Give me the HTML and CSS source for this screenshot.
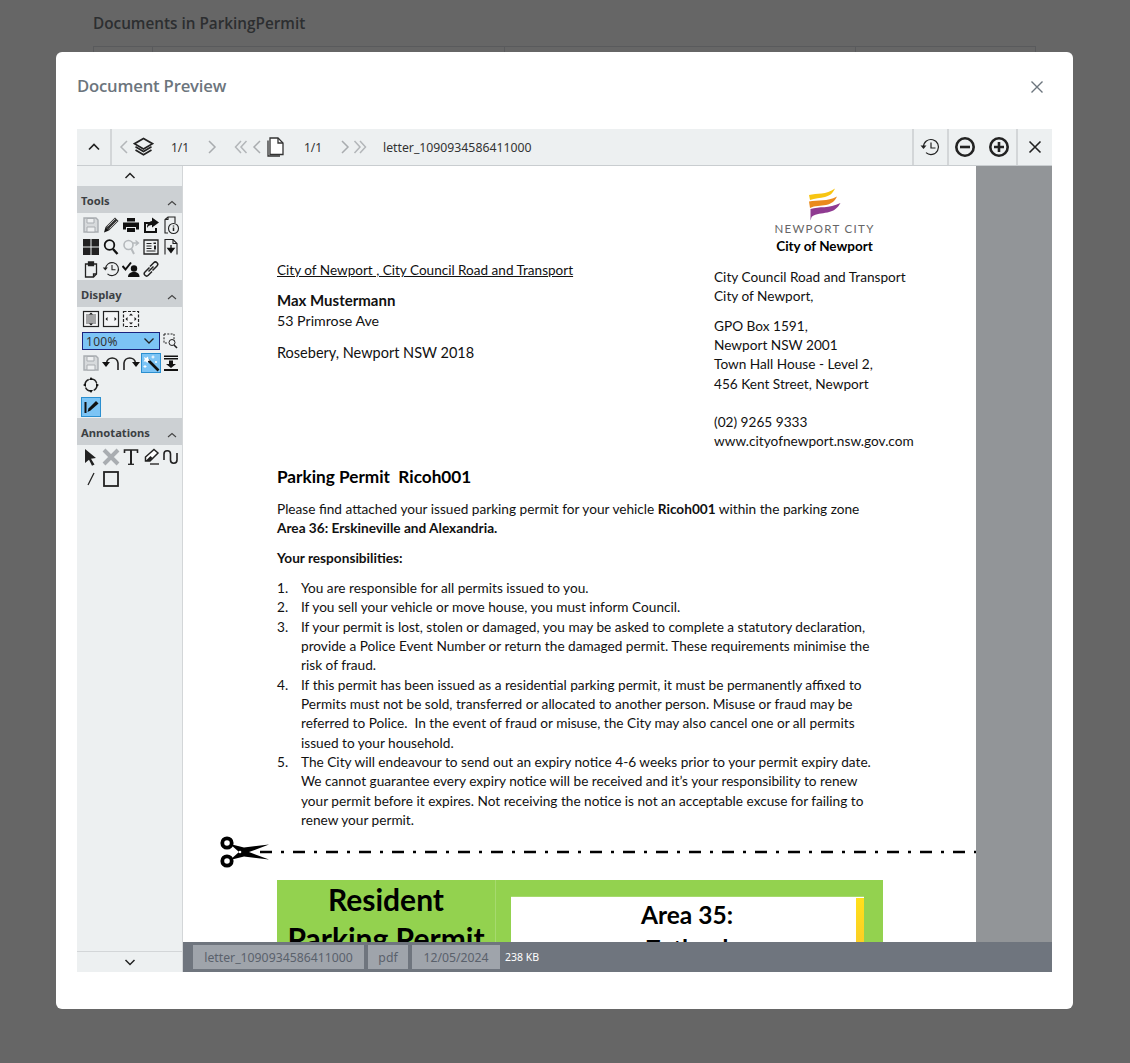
FILE: index.html
```html
<!DOCTYPE html>
<html lang="en">
<head>
  <meta charset="UTF-8">
  <meta name="viewport" content="width=device-width, initial-scale=1.0">
  <title>Document Preview</title>
  <link rel="stylesheet" href="styles.css">
</head>
<body>
  <div class="behind">
    <h2 class="behind-title">Documents in ParkingPermit</h2>
    <div class="behind-table">
      <div class="behind-cell c1"></div>
      <div class="behind-cell c2"></div>
      <div class="behind-cell c3"></div>
      <div class="behind-cell c4"></div>
    </div>
  </div>

  <div class="overlay"></div>

  <div class="modal">
    <div class="modal-head">
      <h3 class="modal-title">Document Preview</h3>
      <svg class="modal-close" width="14" height="14" viewBox="0 0 14 14"><path d="M1.500 1.500l11 11M12.500 1.500l-11 11" stroke="#6c757d" stroke-width="1.400" fill="none"/></svg>
    </div>

    <div class="viewer">
      <div class="toolbar">
        <div class="tb-btn tb-collapse">
          <svg width="14" height="14" viewBox="0 0 14 14"><path d="M2 9.500l5-5 5 5" stroke="#222" stroke-width="1.700" fill="none"/></svg>
        </div>
        <div class="tb-item w16 ml4"><svg width="10" height="16" viewBox="0 0 10 16"><path d="M8 2L2 8l6 6" stroke="#b3b6b9" stroke-width="1.500" fill="none"/></svg></div>
        <div class="tb-item w22">
          <svg width="21" height="20" viewBox="0 0 21 20" fill="none" stroke="#222" stroke-width="1.700"><path d="M10.500 1.500l9 5.200-9 5.200-9-5.200z"/><path d="M2.500 9.800l8 4.600 8-4.600"/><path d="M2.500 13l8 4.700 8-4.700"/></svg>
        </div>
        <div class="tb-item w52 tb-text">1/1</div>
        <div class="tb-item w12"><svg width="10" height="16" viewBox="0 0 10 16"><path d="M2 2l6 6-6 6" stroke="#a9acaf" stroke-width="1.500" fill="none"/></svg></div>
        <div class="tb-item w18 ml14"><svg width="14" height="16" viewBox="0 0 14 16" fill="none" stroke="#b3b6b9" stroke-width="1.500"><path d="M7 2L1.500 8 7 14M12.500 2L7 8l5.500 6"/></svg></div>
        <div class="tb-item w14"><svg width="10" height="16" viewBox="0 0 10 16"><path d="M8 2L2 8l6 6" stroke="#a9acaf" stroke-width="1.500" fill="none"/></svg></div>
        <div class="tb-item w24">
          <svg width="18" height="20" viewBox="0 0 18 20" fill="#fff" stroke="#333" stroke-width="1.300"><path d="M1 3.500v15.500h12" fill="none"/><path d="M3 1h8l5 5v11.500H3z"/><path d="M11 1v5h5" fill="none"/></svg>
        </div>
        <div class="tb-item w50 tb-text">1/1</div>
        <div class="tb-item w14"><svg width="10" height="16" viewBox="0 0 10 16"><path d="M2 2l6 6-6 6" stroke="#a9acaf" stroke-width="1.500" fill="none"/></svg></div>
        <div class="tb-item w16"><svg width="14" height="16" viewBox="0 0 14 16" fill="none" stroke="#b3b6b9" stroke-width="1.500"><path d="M1.500 2L7 8l-5.500 6M7 2l5.500 6L7 14"/></svg></div>
        <div class="tb-name">letter_1090934586411000</div>

        <div class="tb-right">
          <div class="tb-btn tb-sep">
            <svg width="22" height="20" viewBox="0 0 22 20" fill="none" stroke="#222" stroke-width="1.200"><path d="M4.500 10a7.500 7.500 0 1 1 2.500 5.600"/><path d="M1.500 8.500h6l-3 3.500z" fill="#222" stroke="none"/><path d="M12 5.500V11h4.500"/></svg>
          </div>
          <div class="tb-btn tb-sep">
            <svg width="22" height="22" viewBox="0 0 22 22" fill="none" stroke="#222" stroke-width="2.600"><circle cx="11" cy="11" r="8.700"/><path d="M6 11h10"/></svg>
          </div>
          <div class="tb-btn">
            <svg width="22" height="22" viewBox="0 0 22 22" fill="none" stroke="#222" stroke-width="2.600"><circle cx="11" cy="11" r="8.700"/><path d="M6 11h10M11 6v10"/></svg>
          </div>
          <div class="tb-btn tb-sep tb-last">
            <svg width="14" height="14" viewBox="0 0 14 14"><path d="M1.500 1.500l11 11M12.500 1.500l-11 11" stroke="#222" stroke-width="1.600" fill="none"/></svg>
          </div>
        </div>
      </div>

      <div class="viewer-body">
        <aside class="side">
          <div class="side-scroll">
            <svg width="12" height="12" viewBox="0 0 12 12"><path d="M1.500 8l4.500-4.500L10.500 8" stroke="#222" stroke-width="1.500" fill="none"/></svg>
          </div>

          <div class="side-panels">
            <div class="side-head"><span>Tools</span><svg width="10" height="10" viewBox="0 0 10 10"><path d="M1 7l4-3.500L9 7" stroke="#444" stroke-width="1.100" fill="none"/></svg></div>
            <div class="icon-grid tools-grid">
              <div class="ic"><svg width="18" height="18" viewBox="0 0 18 18"><path d="M2 2h12l2 2v12H2z" fill="#d7dadc" stroke="#a9adb1" stroke-width="1.400"/><path d="M5 2.500h7v4.500H5z" fill="#eef0f1" stroke="#a9adb1"/><path d="M5 11h8v5H5z" fill="#eef0f1" stroke="#a9adb1"/></svg></div>
              <div class="ic"><svg width="18" height="18" viewBox="0 0 18 18"><path d="M13 1.500l3.500 3.500-9.500 9.500-3.500-3.500z" fill="#333"/><path d="M2 16.500l1.500-5.500 3.500 3.500z" fill="#111"/><path d="M5.500 10.500l7.500-7.500M7.500 12.500l7.500-7.500" stroke="#eee" stroke-width=".7"/></svg></div>
              <div class="ic"><svg width="18" height="18" viewBox="0 0 18 18" fill="#111"><path d="M5 2h8v3.500H5z"/><path d="M1 6.500h16v7h-3v-2.500H4v2.500H1z"/><path d="M5 12h8v4H5z"/></svg></div>
              <div class="ic"><svg width="18" height="18" viewBox="0 0 18 18"><path d="M2 6h6v2H4v7h9v-3h2v5H2z" fill="#111"/><path d="M10 1.500l7 5-7 5V9C7.500 9 6 10 5 12c0-4 2-6.500 5-7z" fill="#111"/></svg></div>
              <div class="ic"><svg width="18" height="19" viewBox="0 0 18 19" fill="none" stroke="#222" stroke-width="1.100"><path d="M3 12V3.500L6 1h7v6"/><path d="M3 3.500h3V1"/><path d="M3 12v5h3"/><circle cx="11.500" cy="12.500" r="5"/><path d="M11.500 11.500v3.500M11.500 9.500v1" stroke-width="1.500"/></svg></div>

              <div class="ic"><svg width="18" height="18" viewBox="0 0 18 18" fill="#222"><path d="M1 1h7.500v7.500H1zM9.500 1H17v7.500H9.500zM1 9.500h7.500V17H1zM9.500 9.500H17V17H9.500z"/></svg></div>
              <div class="ic"><svg width="18" height="18" viewBox="0 0 18 18" fill="none" stroke="#111"><circle cx="7.500" cy="7" r="4.800" stroke-width="1.800"/><path d="M11 11l4.500 5" stroke-width="2.400"/></svg></div>
              <div class="ic"><svg width="18" height="18" viewBox="0 0 18 18" fill="none" stroke="#b5b9bc"><circle cx="6.500" cy="7" r="4.500" stroke-width="1.600"/><path d="M9.500 11l2.500 5" stroke-width="2"/><path d="M11 5h5M13.500 2.500L16.500 5l-3 2.500" stroke-width="1.300"/></svg></div>
              <div class="ic"><svg width="18" height="18" viewBox="0 0 18 18" fill="none" stroke="#222"><path d="M2 2h14v14H2z" stroke-width="1.300"/><path d="M4.500 5.500h5M4.500 8h5M4.500 10.500h5M4.500 13h9" stroke-width="1"/><path d="M11.500 4.500h2.500v1.500h-2.500zM12 7.500h2v4h-2z" fill="#222" stroke="none"/></svg></div>
              <div class="ic"><svg width="18" height="18" viewBox="0 0 18 18" fill="none" stroke="#222" stroke-width="1.100"><path d="M3 16.500V1.500h8l4 4v11"/><path d="M11 1.500v4h4"/><path d="M9 7v6M6 10.500l3 4 3-4z" fill="#111" stroke="#111" stroke-width="1.300"/></svg></div>

              <div class="ic"><svg width="18" height="18" viewBox="0 0 18 18" fill="none" stroke="#222" stroke-width="1.300"><path d="M3.500 4h11v10l-3 3h-8z"/><path d="M6.500 2h5v3.500h-5z" fill="#222"/><path d="M11.500 17v-3h3"/></svg></div>
              <div class="ic"><svg width="18" height="18" viewBox="0 0 18 18" fill="none" stroke="#222" stroke-width="1.100"><path d="M3.500 9a6.500 6.500 0 1 1 2 4.800"/><path d="M.8 7.500h5l-2.500 3z" fill="#222" stroke="none"/><path d="M10 5v4.800h3.500"/></svg></div>
              <div class="ic"><svg width="18" height="18" viewBox="0 0 18 18"><path d="M.5 6l3 3.500L9 2.500" stroke="#111" stroke-width="2" fill="none"/><circle cx="12" cy="8.500" r="3.200" fill="#111"/><path d="M6 17c0-3.500 2.500-5 6-5s5.500 1.500 5.500 5z" fill="#111"/></svg></div>
              <div class="ic"><svg width="18" height="18" viewBox="0 0 18 18" fill="none" stroke="#222" stroke-width="1.500"><path d="M7.500 7.500L3 12a2.300 2.300 0 0 0 3.300 3.300L10 11.500"/><path d="M10.500 10.500L15 6a2.300 2.300 0 0 0-3.300-3.300L8 6.500"/><path d="M6.500 11.500l5-5"/></svg></div>
            </div>

            <div class="side-head"><span>Display</span><svg width="10" height="10" viewBox="0 0 10 10"><path d="M1 7l4-3.500L9 7" stroke="#444" stroke-width="1.100" fill="none"/></svg></div>
            <div class="icon-grid display-top">
              <div class="ic"><svg width="18" height="18" viewBox="0 0 18 18"><rect x="1.500" y="1.500" width="15" height="15" fill="#f4f5f6" stroke="#222" stroke-width="1.200"/><path d="M4 5h10M4 7h10M4 9h10M4 11h10M4 13h10" stroke="#555"/><path d="M9 2.500l2 2H7zM9 15.500l2-2H7z" fill="#111"/></svg></div>
              <div class="ic"><svg width="18" height="18" viewBox="0 0 18 18"><rect x="1.500" y="1.500" width="15" height="15" fill="#f4f5f6" stroke="#222" stroke-width="1.200"/><path d="M3.500 9l2-2v4zM14.500 9l-2-2v4z" fill="#111"/></svg></div>
              <div class="ic"><svg width="18" height="18" viewBox="0 0 18 18"><rect x="1.500" y="1.500" width="15" height="15" fill="#f4f5f6" stroke="#222" stroke-width="1.200" stroke-dasharray="3 1.500"/><path d="M3.500 9l2-2v4zM14.500 9l-2-2v4zM9 3.500l2 2H7zM9 14.500l2-2H7z" fill="#111"/></svg></div>
            </div>
            <div class="zoom-row">
              <div class="zoom-select"><span>100%</span><svg width="12" height="8" viewBox="0 0 12 8"><path d="M1.500 1.500L6 6l4.500-4.500" stroke="#222" stroke-width="1.300" fill="none"/></svg></div>
              <svg width="16" height="16" viewBox="0 0 16 16" fill="none" stroke="#222"><path d="M1 1h10v7M1 1v9h4" stroke-dasharray="2 1.300"/><circle cx="9" cy="9.500" r="3"/><path d="M11 12l3 3" stroke-width="1.600"/></svg>
            </div>
            <div class="icon-grid display-bottom">
              <div class="ic"><svg width="18" height="18" viewBox="0 0 18 18"><path d="M2 2h12l2 2v12H2z" fill="#d7dadc" stroke="#a9adb1" stroke-width="1.400"/><path d="M5 2.500h7v4.500H5z" fill="#eef0f1" stroke="#a9adb1"/><path d="M5 11h8v5H5z" fill="#eef0f1" stroke="#a9adb1"/></svg></div>
              <div class="ic"><svg width="18" height="18" viewBox="0 0 18 18" fill="none"><path d="M4.500 9a5.800 5.800 0 0 1 11.500 0v7" stroke="#222" stroke-width="1.600"/><path d="M0 8h8l-4 5z" fill="#111"/></svg></div>
              <div class="ic"><svg width="18" height="18" viewBox="0 0 18 18" fill="none"><path d="M13.500 9A5.800 5.800 0 0 0 2 9v7" stroke="#222" stroke-width="1.600"/><path d="M18 8h-8l4 5z" fill="#111"/></svg></div>
              <div class="ic ic-on"><svg width="18" height="18" viewBox="0 0 18 18"><path d="M6 6l10.500 10.500" stroke="#111" stroke-width="2.600"/><path d="M2 3l2 1 2-1.500.3 2.400 2 1.300-2.200.8-.7 2.300-1.400-1.900-2.500.2 1.300-2z" fill="#fff"/><path d="M11 1.500v3M9.500 3h3M3 11v3M1.500 12.500h3M14 7v2M13 8h2" stroke="#fff"/></svg></div>
              <div class="ic"><svg width="18" height="18" viewBox="0 0 18 18" fill="#111"><path d="M2 1.500h14v1.500H2zM2 4h14v1.500H2z"/><path d="M7 6.500h4V10h3l-5 4-5-4h3z"/><path d="M2 15h14v2H2z"/></svg></div>
            </div>
            <div class="icon-grid display-single">
              <div class="ic"><svg width="18" height="18" viewBox="0 0 18 18"><circle cx="9" cy="9" r="6" fill="none" stroke="#222" stroke-width="1.500" stroke-dasharray="6.400 3"/><path d="M9 1l2 3H7zM9 17l-2-3h4zM1 9l3-2v4zM17 9l-3 2V7z" fill="#111"/></svg></div>
            </div>
            <div class="icon-grid display-single last">
              <div class="ic ic-on"><svg width="18" height="18" viewBox="0 0 18 18"><path d="M3.500 4v11" stroke="#111" stroke-width="2"/><path d="M14 3l2.500 2.500-8 7L5.500 14l1-3.500z" fill="#111"/></svg></div>
            </div>

            <div class="side-head"><span>Annotations</span><svg width="10" height="10" viewBox="0 0 10 10"><path d="M1 7l4-3.500L9 7" stroke="#444" stroke-width="1.100" fill="none"/></svg></div>
            <div class="icon-grid annot-grid">
              <div class="ic"><svg width="18" height="18" viewBox="0 0 18 18"><path d="M3 1l11 9-5 .8 3.500 5.700-2.500 1.200-3-6L3 15z" fill="#222"/></svg></div>
              <div class="ic"><svg width="18" height="18" viewBox="0 0 18 18"><path d="M2 2l14 14M16 2L2 16" stroke="#a9adb1" stroke-width="4"/></svg></div>
              <div class="ic"><svg width="18" height="18" viewBox="0 0 18 18" fill="none" stroke="#222"><path d="M2.500 5V2h13v3" stroke-width="1.600"/><path d="M9 2v14" stroke-width="2"/><path d="M6 16.300h6" stroke-width="1.300"/></svg></div>
              <div class="ic"><svg width="18" height="18" viewBox="0 0 18 18"><path d="M12 1.500l4 3.500-8 8H3.500v-4z" fill="#fff" stroke="#222" stroke-width="1.500"/><path d="M3.500 13l5-5 2 2-3 3z" fill="#222"/><path d="M8 15h9v2H8z" fill="#666"/></svg></div>
              <div class="ic"><svg width="18" height="18" viewBox="0 0 18 18"><path d="M2 12V6a3.200 3.200 0 0 1 6.500 0v6a3.200 3.200 0 0 0 6.500 0V5" fill="none" stroke="#222" stroke-width="1.600"/></svg></div>
              <div class="ic"><svg width="18" height="18" viewBox="0 0 18 18"><path d="M12 3L6 15" stroke="#222" stroke-width="1.300"/></svg></div>
              <div class="ic"><svg width="18" height="18" viewBox="0 0 18 18"><rect x="2" y="2" width="14" height="14" fill="none" stroke="#222" stroke-width="1.800"/></svg></div>
            </div>
          </div>

          <div class="side-scroll side-scroll-bottom">
            <svg width="12" height="12" viewBox="0 0 12 12"><path d="M1.500 4l4.500 4.500L10.500 4" stroke="#222" stroke-width="1.500" fill="none"/></svg>
          </div>
        </aside>

        <div class="doc-area">
          <div class="doc-scroll">
            <div class="page">
              <div class="letter-top">
                <div class="addr-left">
                  <p class="sender">City of Newport , City Council Road and Transport</p>
                  <p class="name">Max Mustermann</p>
                  <p class="street">53 Primrose Ave</p>
                  <p class="suburb">Rosebery, Newport NSW 2018</p>
                </div>
                <div class="addr-right">
                  <div class="logo">
                    <svg width="36" height="33" viewBox="0 0 36 33">
                      <path d="M2 7C10 5 19 7 28 .5c-2 4-4 7-10 8.500-5 1.500-10 1-15 3z" fill="#f7c512"/>
                      <path d="M2 13.500c9-2 18 .5 28-5-2 4.500-5 7-11 8.500-5 1-11 .5-16 3z" fill="#ea8a1d"/>
                      <path d="M3.500 21c9-3 18 0 30-6-3 5-6 8-13 9.500-6 1-11 1-15.500 4-1 1.500-1 3-1.500 4z" fill="#8f3a91"/>
                    </svg>
                    <div class="logo-word">NEWPORT CITY</div>
                    <div class="logo-city">City of Newport</div>
                  </div>
                  <p class="r1">City Council Road and Transport</p>
                  <p>City of Newport,</p>
                  <p class="r2">GPO Box 1591,</p>
                  <p>Newport NSW 2001</p>
                  <p>Town Hall House - Level 2,</p>
                  <p>456 Kent Street, Newport</p>
                  <p class="r3">(02) 9265 9333</p>
                  <p>www.cityofnewport.nsw.gov.com</p>
                </div>
              </div>

              <h1 class="permit-title">Parking Permit&nbsp; Ricoh001</h1>
              <p class="intro">Please find attached your issued parking permit for your vehicle <b>Ricoh001</b> within the parking zone<br><b>Area 36: Erskineville and Alexandria.</b></p>
              <p class="resp"><b>Your responsibilities:</b></p>
              <ol class="rules">
                <li>You are responsible for all permits issued to you.</li>
                <li>If you sell your vehicle or move house, you must inform Council.</li>
                <li>If your permit is lost, stolen or damaged, you may be asked to complete a statutory declaration,<br>provide a Police Event Number or return the damaged permit. These requirements minimise the<br>risk of fraud.</li>
                <li>If this permit has been issued as a residential parking permit, it must be permanently affixed to<br>Permits must not be sold, transferred or allocated to another person. Misuse or fraud may be<br>referred to Police.&nbsp; In the event of fraud or misuse, the City may also cancel one or all permits<br>issued to your household.</li>
                <li>The City will endeavour to send out an expiry notice 4-6 weeks prior to your permit expiry date.<br>We cannot guarantee every expiry notice will be received and it’s your responsibility to renew<br>your permit before it expires. Not receiving the notice is not an acceptable excuse for failing to<br>renew your permit.</li>
              </ol>

              <svg class="cut-line" width="756" height="34" viewBox="0 0 756 34">
                <g fill="none" stroke="#000" stroke-width="3.800">
                  <circle cx="7" cy="9" r="4.700"/>
                  <circle cx="7" cy="27" r="4.700"/>
                </g>
                <path d="M10 10l14 3.500 25-3-20 7.500 20 7.500-25-3-14 3.500 9-8z" fill="#000"/>
                <circle cx="20" cy="18" r="1.300" fill="#fff"/>
                <line x1="40" y1="18" x2="756" y2="18" stroke="#000" stroke-width="2.400" stroke-dasharray="12 9 3 9"/>
              </svg>

              <div class="permit">
                <div class="permit-left">
                  <div>Resident</div>
                  <div>Parking Permit</div>
                </div>
                <div class="permit-right">
                  <div class="permit-white">
                    <div class="area-text">
                      <div>Area 35:</div>
                      <div>Zetland</div>
                    </div>
                    <div class="permit-strip"></div>
                  </div>
                </div>
              </div>
            </div>
            <div class="gutter"></div>
          </div>

          <div class="status">
            <span class="chip chip-name">letter_1090934586411000</span>
            <span class="chip chip-ext">pdf</span>
            <span class="chip chip-date">12/05/2024</span>
            <span class="size">238 KB</span>
          </div>
        </div>
      </div>
    </div>
  </div>
</body>
</html>
```

FILE: styles.css
```css
* {
  margin: 0;
  padding: 0;
  box-sizing: border-box;
}
html, body {
  height: 100%;
  overflow: hidden;
}
body {
  background: #fff;
  font-family: "Open Sans", "Noto Sans", sans-serif;
}

/* page behind the modal */
.behind {
  padding: 13px 94px 0 93px;
}
.behind-title {
  font-size: 15.3px;
  line-height: 21px;
  font-weight: 600;
  color: #6f7479;
}
.behind-table {
  display: flex;
  height: 200px;
  margin-top: 12px;
  border: 1px solid #dee2e6;
}
.behind-cell {
  border-right: 1px solid #dee2e6;
}
.c1 { width: 59px; }
.c2 { width: 352px; }
.c3 { width: 351px; }
.c4 { flex: 1; border-right: 0; }

.overlay {
  position: fixed;
  inset: 0;
  background: rgba(0, 0, 0, 0.6);
}

.modal {
  position: fixed;
  left: 56px;
  top: 52px;
  width: 1017px;
  height: 957px;
  padding: 0 21px;
  background: #fff;
  border-radius: 6px;
}
.modal-head {
  display: flex;
  justify-content: space-between;
  align-items: center;
  height: 77px;
  padding-bottom: 10px;
}
.modal-title {
  font-size: 16.7px;
  font-weight: 600;
  color: #6c757d;
  letter-spacing: -0.2px;
}
.modal-close {
  margin: 2px 8px 0 0;
}

/* viewer */
.viewer {
  height: 843px;
  display: flex;
  flex-direction: column;
  background: #edf0f1;
}
.toolbar {
  display: flex;
  align-items: center;
  flex: none;
  height: 37px;
  border-bottom: 1px solid #c9cdd0;
  font-family: "Noto Sans", sans-serif;
  font-size: 12.25px;
  color: #333;
}
.tb-btn {
  display: flex;
  align-items: center;
  justify-content: center;
  width: 34px;
  height: 36px;
}
.tb-collapse {
  width: 35px;
  border-right: 2px solid #d3d6d8;
}
.tb-item {
  display: flex;
  align-items: center;
  justify-content: center;
}
.tb-text { font-size: 12px; }
.w12 { width: 12px; }
.w14 { width: 14px; }
.w16 { width: 16px; }
.w18 { width: 18px; }
.w22 { width: 22px; }
.w24 { width: 24px; }
.w50 { width: 50px; }
.w52 { width: 52px; }
.ml4 { margin-left: 4px; }
.ml14 { margin-left: 14px; }
.tb-name {
  margin-left: 15px;
}
.tb-right {
  display: flex;
  margin-left: auto;
}
.tb-sep {
  width: 35px;
  padding-right: 2px;
  border-left: 2px solid #d3d6d8;
}
.tb-last {
  width: 36px;
  padding-right: 0;
}

.viewer-body {
  display: flex;
  flex: 1;
  min-height: 0;
}

/* left panel */
.side {
  display: flex;
  flex-direction: column;
  flex: none;
  width: 106px;
  border-right: 1px solid #d3d6d8;
}
.side-scroll {
  display: flex;
  align-items: center;
  justify-content: center;
  flex: none;
  height: 20px;
}
.side-scroll-bottom {
  height: 21px;
  border-top: 1px solid #d3d6d8;
}
.side-panels {
  flex: 1;
  min-height: 0;
}
.side-head {
  display: flex;
  justify-content: space-between;
  align-items: center;
  height: 27px;
  padding: 1px 5px 0 4px;
  background: #ccd0d3;
  font-family: "Noto Sans", sans-serif;
  font-size: 11.2px;
  font-weight: 700;
  color: #3c4043;
}
.side-head svg {
  margin-top: 5px;
}
.icon-grid {
  display: grid;
  grid-template-columns: repeat(5, 20px);
  grid-auto-rows: 22px;
  padding-left: 4px;
}
.tools-grid {
  padding-top: 1px;
  height: 67px;
}
.ic {
  display: flex;
  align-items: center;
  justify-content: center;
  width: 20px;
  height: 22px;
}
.ic-on svg {
  background: #7cc4f5;
  outline: 1px solid #2a8fd0;
}
.display-top {
  padding-top: 1px;
  height: 24px;
}
.zoom-row {
  display: flex;
  align-items: center;
  gap: 3px;
  height: 18px;
  margin: 1px 0 0 5px;
}
.zoom-select {
  display: flex;
  align-items: center;
  justify-content: space-between;
  width: 78px;
  height: 18px;
  padding: 0 4px 0 3px;
  background: #7cc4f5;
  border: 1px solid #1a237e;
  font-family: "Noto Sans", sans-serif;
  font-size: 12px;
  letter-spacing: 0.3px;
  color: #333;
}
.display-bottom {
  padding-top: 2px;
  height: 24px;
}
.display-single {
  height: 22px;
}
.annot-grid {
  padding-top: 1px;
}

/* document */
.doc-area {
  display: flex;
  flex-direction: column;
  flex: 1;
  min-width: 0;
}
.doc-scroll {
  display: flex;
  flex: 1;
  min-height: 0;
  overflow: hidden;
}
.page {
  flex: none;
  width: 793px;
  height: 1100px;
  padding: 0 0 0 94px;
  background: #fff;
  font-family: Lato, "Open Sans", sans-serif;
  font-size: 13.65px;
  line-height: 19.35px;
  color: #111;
}
.gutter {
  flex: 1;
  background: #929598;
}
.letter-top {
  display: flex;
  height: 282px;
}
.addr-left {
  width: 437px;
  padding-top: 95px;
}
.sender {
  font-size: 13.55px;
  text-decoration: underline;
}
.name {
  margin-top: 10px;
  font-size: 15px;
  font-weight: 700;
  line-height: 20px;
}
.street {
  font-size: 14.2px;
  line-height: 21px;
}
.suburb {
  margin-top: 11px;
  font-size: 14.5px;
  line-height: 21px;
}
.addr-right {
  padding-top: 22px;
}
.logo {
  display: flex;
  flex-direction: column;
  align-items: center;
  width: 221px;
  height: 80px;
}
.logo-word {
  margin-top: 1px;
  font-family: Lato, sans-serif;
  font-size: 11.5px;
  line-height: 14px;
  letter-spacing: 1.3px;
  color: #666;
}
.logo-city {
  font-size: 13.5px;
  line-height: 18px;
  font-weight: 700;
  color: #000;
  margin-top: 1px;
}
.r2 { margin-top: 10px; }
.r3 { margin-top: 19px; }
.permit-title {
  margin-top: 17px;
  font-size: 17.2px;
  font-weight: 700;
  line-height: 24px;
  color: #000;
}
.intro {
  margin-top: 11px;
}
.resp {
  margin-top: 10px;
}
.rules {
  margin-top: 11px;
  padding-left: 24px;
  list-style: none;
  counter-reset: rule;
}
.rules li {
  counter-increment: rule;
}
.rules li::before {
  content: counter(rule) ".";
  display: inline-block;
  width: 24px;
  margin-left: -24px;
}
.cut-line {
  display: block;
  margin: 3px 0 0 -57px;
}
.permit {
  display: flex;
  width: 606px;
  height: 300px;
  margin-top: 12px;
  background: #93d24f;
}
.permit-left {
  width: 219px;
  border-right: 1px solid #a6da6e;
  font-size: 30px;
  font-weight: 700;
  line-height: 39px;
  text-align: center;
  color: #000;
}
.permit-right {
  flex: 1;
  padding: 17px 19px 0 15px;
}
.permit-white {
  display: flex;
  height: 280px;
  background: #fff;
  box-shadow: 0 -1px 0 #a6da6e;
}
.area-text {
  flex: 1;
  padding: 1px 0 0 7px;
  font-size: 24.5px;
  font-weight: 700;
  line-height: 34px;
  text-align: center;
  color: #000;
}
.permit-strip {
  width: 8px;
  margin-top: 1px;
  background: linear-gradient(180deg, #ffe01a, #f2a93c 50%, #d8705a 80%);
}

/* bottom bar */
.status {
  display: flex;
  align-items: center;
  flex: none;
  gap: 4px;
  height: 30px;
  padding-left: 10px;
  background: #6f757e;
  font-family: "Noto Sans", sans-serif;
}
.chip {
  display: flex;
  align-items: center;
  justify-content: center;
  height: 24px;
  background: #9fa4ab;
  font-size: 12.25px;
  color: #5a616b;
}
.chip-name { width: 171px; }
.chip-ext { width: 40px; }
.chip-date { width: 88px; }
.size {
  margin-left: 1px;
  font-size: 10.5px;
  color: #fff;
}
```
